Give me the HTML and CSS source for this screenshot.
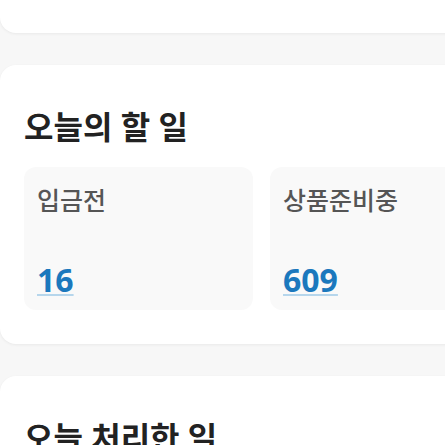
FILE: index.html
```html
<!DOCTYPE html>
<html lang="ko">
<head>
    <meta charset="UTF-8">
    <meta name="viewport" content="width=device-width, initial-scale=1.0">
    <title>대시보드</title>
    <link rel="stylesheet" href="styles.css">
</head>
<body>
    <div class="dashboard">
        <section class="card card-top"></section>

        <section class="card">
            <h2 class="card-title">오늘의 할 일</h2>
            <div class="task-grid">
                <div class="task-box">
                    <span class="task-label">입금전</span>
                    <a href="#" class="task-count">16</a>
                </div>
                <div class="task-box">
                    <span class="task-label">상품준비중</span>
                    <a href="#" class="task-count">609</a>
                </div>
            </div>
        </section>

        <section class="card">
            <h2 class="card-title">오늘 처리한 일</h2>
        </section>
    </div>
</body>
</html>
```

FILE: styles.css
```css
html, body {
    margin: 0;
    padding: 0;
    overflow: hidden;
}

body {
    font-family: "Noto Sans", "Noto Sans CJK KR", sans-serif;
    background-color: #f7f7f7;
    color: #222;
}

.dashboard {
    display: flex;
    flex-direction: column;
    gap: 32px;
    width: 523px;
    margin-top: -67px;
}

.card {
    background-color: #fff;
    border-radius: 16px;
    box-shadow: 0 1px 3px rgba(0, 0, 0, 0.06);
    padding: 40px 24px 34px;
}

.card-top {
    height: 100px;
    padding: 0;
}

.card-title {
    margin: 0 0 18px;
    font-size: 32px;
    font-weight: 700;
    line-height: 44px;
    color: #222;
}

.task-grid {
    display: grid;
    grid-template-columns: 229px 229px;
    gap: 17px;
}

.task-box {
    display: flex;
    flex-direction: column;
    justify-content: space-between;
    height: 143px;
    box-sizing: border-box;
    padding: 16px 13px 10px;
    background-color: #f9f9f9;
    border-radius: 12px;
}

.task-label {
    font-size: 25px;
    font-weight: 500;
    line-height: 34px;
    color: #555;
}

.task-count {
    align-self: flex-start;
    font-size: 32px;
    font-weight: 700;
    line-height: 40px;
    color: #1b78bd;
    text-decoration: underline;
    text-decoration-color: #b6d6ec;
    text-decoration-thickness: 2px;
    text-underline-offset: 2px;
}
```
